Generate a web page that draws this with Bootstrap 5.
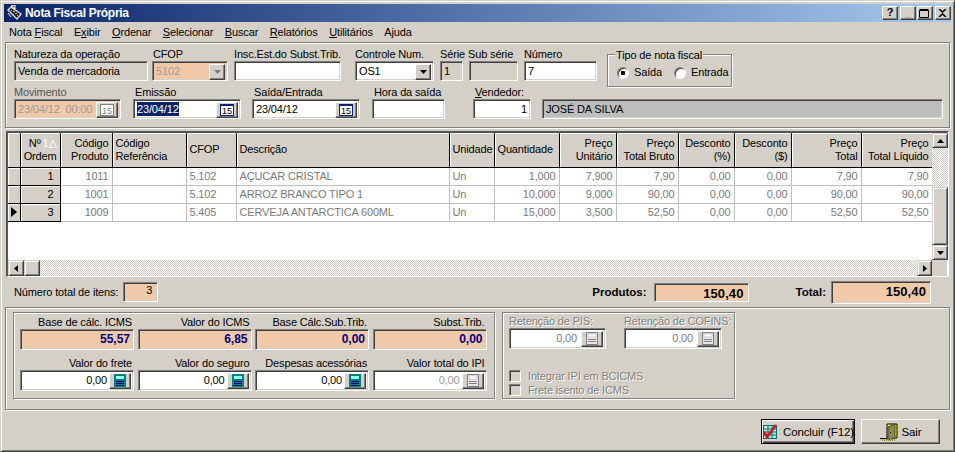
<!DOCTYPE html>
<html lang="pt-BR">
<head>
    <meta charset="UTF-8">
    <meta name="viewport" content="width=device-width, initial-scale=1.0">
    <title>Nota Fiscal Própria</title>
    <link href="https://cdn.jsdelivr.net/npm/bootstrap@5.3.0/dist/css/bootstrap.min.css" rel="stylesheet">
    <style>
        html, body { margin: 0; height: 452px; overflow: hidden; background: #d4d0c8; }
        body, .table { font-family: "Liberation Sans", Arial, sans-serif; font-size: 11px; letter-spacing: -.15px; line-height: 13px; color: #000; }

        .window { width: 955px; height: 452px; padding: 3px; background: #d4d0c8; border: 1px solid; border-color: #d4d0c8 #404040 #404040 #d4d0c8; box-shadow: inset 1px 1px 0 #fff, inset -1px -1px 0 #808080; margin: 0; }
        .titlebar { height: 18px; background: linear-gradient(90deg, #0a246a, #a6caf0); color: #fff; font-weight: 700; font-size: 12px; letter-spacing: -.3px; padding-left: 3px; }
        .titlebar svg { margin-right: 2px; }
        .cap-btn { width: 16px; height: 14px; background: #d4d0c8; border: 1px solid; border-color: #fff #404040 #404040 #fff; box-shadow: inset -1px -1px 0 #808080; margin-left: 1px; padding: 0; color: #000; font-weight: 700; font-size: 11px; line-height: 11px; text-align: center; }
        .cap-gap { margin-right: 1px; }
        .cap-dim { color: #808080; }
        .menubar { height: 20px; padding-left: 5px; gap: 11.5px; }
        .menubar .nav-link { padding: 0; color: #000; font-size: 11px; }

        .etched { border: 1px solid #808080; box-shadow: inset 1px 1px 0 #fff, 1px 1px 0 #fff; }
        .panel-top { height: 86px; margin: 0 1px; padding: 5px 8px 0; }
        .form-line { height: 38px; }
        .fld { flex: none; white-space: nowrap; }
        .fld label { display: block; height: 13px; }
        .box { height: 20px; background: #fff; border: 1px solid; border-color: #808080 #fff #fff #808080; box-shadow: inset 1px 1px 0 #404040, inset -1px -1px 0 #d4d0c8; padding: 2px 3px; line-height: 15px; overflow: hidden; }
        .box.plain { background: #d4d0c8; }
        .box.peach { background: #f0c9a9; }
        .box.grey { background: #bdbdbd; }
        .box.dim { color: #9a9a9a; }
        .box.with-btn { padding-right: 2px; }
        .box .spin { flex: none; width: 22px; height: 16px; margin: 0 0 0 auto; background: #d4d0c8; border: 1px solid; border-color: #fff #404040 #404040 #fff; box-shadow: inset -1px -1px 0 #808080; padding: 0; }
        .box .spin.combo { width: 16px; }
        .sel { background: #0a246a; color: #fff; }
        .soft { color: #555; }

        .f-nat { width: 134px; }
        .f-cfop { width: 76px; margin-left: 4px; }
        .f-insc { width: 107px; margin-left: 6px; }
        .f-ctrl { width: 79px; margin-left: 14px; }
        .f-serie { width: 23px; margin-left: 6px; }
        .f-sub { width: 49px; margin-left: 6px; }
        .f-num { width: 73px; margin-left: 6px; }
        .f-mov { width: 107px; }
        .f-emi { width: 108px; margin-left: 12px; }
        .f-sai { width: 108px; margin-left: 11px; }
        .f-hora { width: 73px; margin-left: 12px; }
        .f-vend { width: 58px; margin-left: 28px; }
        .f-name { width: 401px; margin-left: 11px; }
        .f-cfop label { padding-left: 1px; }
        .f-sub label { margin-left: -1px; }
        .f-vend label { padding-left: 2px; }
        .f-emi label, .f-sai label, .f-hora label { padding-left: 2px; }

        .tipo { position: relative; flex: none; width: 125px; height: 33px; margin: 6px 0 0 10px; padding: 11px 0 0 9px; gap: 12px; }
        .tipo legend { position: absolute; top: -6px; left: 7px; width: auto; margin: 0; padding: 0 1px; background: #d4d0c8; font-size: 11px; line-height: 12px; float: none; }
        .radio { appearance: none; flex: none; width: 12px; height: 12px; margin: 0 5px 0 0; border-radius: 50%; background: #fff; border: 1px solid; border-color: #808080 #fff #fff #808080; box-shadow: inset 1px 1px 0 #404040; }
        .radio:checked { background: radial-gradient(circle, #000 0 2px, #fff 2.5px); }

        .gridbox { height: 146px; margin: 3px 0 0 2px; width: 943px; background: #d4d0c8; border: 2px solid; border-color: #555 #fff #fff #555; border-bottom: 1px solid #fff; }
        .grid-main { width: 924px; flex: none; }
        .grid-view { height: 127px; background: #fff; overflow: hidden; }
        .table { table-layout: fixed; width: 924px; margin: 0; --bs-table-bg: transparent; }
        .table > :not(caption) > * > * { padding: 0 3px; border: 0; box-shadow: none; white-space: nowrap; overflow: hidden; }
        .table thead th { height: 34px; background: #d4d0c8; font-weight: 400; vertical-align: middle; border-right: 1px solid #000; border-bottom: 1px solid #000; box-shadow: inset 1px 1px 0 #fff; line-height: 13px; }
        .table tbody td { height: 18px; color: #7b7b7b; border-right: 1px solid #c0c0c0; border-bottom: 1px solid #c0c0c0; vertical-align: middle; }
        .table tbody td.fixed { background: #d4d0c8; color: #000; border-right: 1px solid #000; border-bottom: 1px solid #000; box-shadow: inset 1px 1px 0 #fff; padding: 0 6px 0 2px; }
        .table tbody td.mark { padding: 0 0 0 3px; }
        .sort { color: #fff; margin-left: 2px; }
        .c1 { width: 12px; } .c2 { width: 40px; } .c3 { width: 52px; } .c4 { width: 74px; } .c5 { width: 50px; } .c6 { width: 213px; } .c7 { width: 45px; }
        .c8 { width: 65px; } .c9 { width: 57px; } .c10 { width: 62px; } .c11 { width: 56px; } .c12 { width: 57px; } .c13 { width: 70px; } .c14 { width: 71px; }

        .sb-btn { flex: none; width: 16px; height: 16px; background: #d4d0c8; border: 1px solid; border-color: #d4d0c8 #404040 #404040 #d4d0c8; box-shadow: inset 1px 1px 0 #fff, inset -1px -1px 0 #808080; padding: 0; line-height: 0; }
        .sb-track { flex: 1 1 auto; background: repeating-conic-gradient(#fff 0 25%, #d4d0c8 0 50%) 0 0 / 2px 2px; }
        .hbar { height: 16px; }
        .vbar { width: 16px; height: 127px; flex: none; }
        .vbar .sb-thumb { height: 58px; width: 16px; }
        .vbar .sb-track { flex: 0 0 39px; }
        .vbar .sb-btn.small { height: 15px; }
        .hbar .sb-btn.last { width: 15px; }

        .totals { height: 30px; padding: 0 19px 0 9px; margin: 0 1px; }
        .totals b { font-size: 11.5px; letter-spacing: 0; }
        .t-items { width: 35px; margin-left: 5px; text-align: right; padding: 0 5px 0 0; line-height: 15px; }
        .t-prod { width: 95px; height: 19px; margin-left: 7px; text-align: right; font-weight: 700; font-size: 13px; padding: 2px 4px; letter-spacing: .1px; }
        .t-total { width: 100px; height: 23px; margin-left: 5px; text-align: right; font-weight: 700; font-size: 13px; padding: 2px 4px; letter-spacing: .1px; }
        .gap-total { margin-left: 47px; }

        .panel-bottom { height: 103px; margin: 0 1px; padding: 4px 7px; gap: 7px; }
        .group { height: 87px; flex: none; }
        .group-tax { width: 482px; padding: 3px 0 0 6px; display: grid; grid-template-columns: repeat(4, 114px); column-gap: 3.5px; grid-auto-rows: 41px; }
        .tax { text-align: right; }
        .tax label { display: block; height: 13px; padding-right: 2px; }
        .tax .box { height: 21px; text-align: right; padding: 2px 2px 2px 3px; }
        .tax .num { margin-left: auto; padding-right: 2px; }
        .tax .val { font-weight: 700; color: #00007f; font-size: 12px; letter-spacing: 0; padding-right: 3px; }
        .group-ret { width: 233px; padding: 2px 0 0 6px; color: #808080; }
        .off { color: #808080; text-shadow: 1px 1px 0 #fff; white-space: nowrap; }
        .ret { flex: none; }
        .ret-a { width: 97px; }
        .ret-b { width: 98px; margin-left: 18px; }
        .ret-row { height: 42px; margin-bottom: 12px; }
        .ret .box { height: 21px; text-align: right; color: #808080; padding: 2px; }
        .chk { height: 14px; }
        .chk span.tick { flex: none; width: 12px; height: 12px; margin-right: 7px; border: 1px solid; border-color: #808080 #fff #fff #808080; box-shadow: inset 1px 1px 0 #404040; }

        .footer { height: 38px; padding: 9px 11px 0 0; gap: 6px; }
        .win-btn { height: 25px; padding: 0; border-radius: 0; background: #d4d0c8; color: #000; font-size: 11.5px; letter-spacing: -.15px; line-height: 14px; white-space: nowrap; border: 1px solid; border-color: #fff #404040 #404040 #fff; box-shadow: inset -1px -1px 0 #808080; gap: 4px; }
        .win-btn.default { width: 94px; outline: 1px solid #000; outline-offset: -1px; box-shadow: inset 1px 1px 0 #fff, inset -1px -1px 0 #404040, inset -2px -2px 0 #808080; }
        .win-btn.exit { width: 79px; }
    </style>
</head>
<body>
<div class="window d-flex flex-column">
    <div class="titlebar d-flex align-items-center">
        <svg width="16" height="16" viewBox="0 0 16 16"><path d="M0 5 4 1l11 8-5 6z" fill="#d8d8d8"/><path d="M2 5 4 3l9 6-3 4z" fill="#222"/><path d="M4 5h1v1H4zM6 6h2v1H6zM8 8h2v1H8zM6 9h1v1H6zM10 10h1v1h-1z" fill="#e0c060"/><path d="M4 1 8 0v4zM1 8l3 4" stroke="#fff" fill="#666"/></svg>
        <span>Nota Fiscal Própria</span>
        <div class="ms-auto d-flex align-items-center">
            <div class="cap-btn cap-gap">?</div>
            <div class="cap-btn cap-dim">_</div>
            <div class="cap-btn cap-gap d-flex align-items-center justify-content-center"><svg width="10" height="9" viewBox="0 0 10 9"><path d="M.5 1.5h9v7h-9zM.5.5h9" fill="none" stroke="#000"/></svg></div>
            <div class="cap-btn d-flex align-items-center justify-content-center"><svg width="9" height="8" viewBox="0 0 9 8"><path d="M1 0l3.5 3L8 0M1 8l3.5-3L8 8" fill="none" stroke="#000" stroke-width="1.5"/></svg></div>
        </div>
    </div>

    <nav class="nav menubar align-items-center">
        <a class="nav-link" href="#">Nota <u>F</u>iscal</a>
        <a class="nav-link" href="#">E<u>x</u>ibir</a>
        <a class="nav-link" href="#"><u>O</u>rdenar</a>
        <a class="nav-link" href="#"><u>S</u>elecionar</a>
        <a class="nav-link" href="#"><u>B</u>uscar</a>
        <a class="nav-link" href="#"><u>R</u>elatórios</a>
        <a class="nav-link" href="#"><u>U</u>tilitários</a>
        <a class="nav-link" href="#">A<u>j</u>uda</a>
    </nav>

    <div class="etched panel-top">
        <div class="d-flex form-line">
            <div class="fld f-nat"><label>Natureza da operação</label><div class="box plain">Venda de mercadoria</div></div>
            <div class="fld f-cfop"><label>CFOP</label><div class="box peach dim with-btn d-flex"><span>5102</span><button class="spin combo d-flex align-items-center justify-content-center"><svg width="7" height="4" viewBox="0 0 7 4"><path d="M0 0h7L3.5 4z" fill="#808080"/></svg></button></div></div>
            <div class="fld f-insc"><label>Insc.Est.do Subst.Trib.</label><div class="box"></div></div>
            <div class="fld f-ctrl"><label>Controle Num.</label><div class="box with-btn d-flex"><span>OS1</span><button class="spin combo d-flex align-items-center justify-content-center"><svg width="7" height="4" viewBox="0 0 7 4"><path d="M0 0h7L3.5 4z"/></svg></button></div></div>
            <div class="fld f-serie"><label>Série</label><div class="box plain">1</div></div>
            <div class="fld f-sub"><label>Sub série</label><div class="box plain"></div></div>
            <div class="fld f-num"><label>Número</label><div class="box">7</div></div>
            <fieldset class="tipo etched d-flex align-items-start">
                <legend>Tipo de nota fiscal</legend>
                <div class="d-flex align-items-center"><input class="radio" type="radio" name="tipo" checked><span>Saída</span></div>
                <div class="d-flex align-items-center"><input class="radio" type="radio" name="tipo"><span>Entrada</span></div>
            </fieldset>
        </div>
        <div class="d-flex">
            <div class="fld f-mov"><label class="soft">Movimento</label><div class="box peach dim with-btn d-flex"><span>23/04/12&nbsp; 00:00</span><button class="spin d-flex align-items-center justify-content-center"><svg width="14" height="12" viewBox="0 0 14 12"><rect x=".5" y=".5" width="13" height="11" fill="#fff" stroke="#808080"/><text x="7" y="9.5" font-size="9" text-anchor="middle" fill="#808080" font-family="Liberation Sans">15</text></svg></button></div></div>
            <div class="fld f-emi"><label>Emissão</label><div class="box with-btn d-flex"><span class="sel">23/04/12</span><button class="spin d-flex align-items-center justify-content-center"><svg width="14" height="12" viewBox="0 0 14 12"><rect x=".5" y=".5" width="13" height="11" fill="#fff" stroke="#0a246a"/><path d="M1 1.5h12" stroke="#0a246a"/><text x="7" y="10" font-size="9" text-anchor="middle" fill="#000" font-family="Liberation Sans">15</text></svg></button></div></div>
            <div class="fld f-sai"><label>Saída/Entrada</label><div class="box with-btn d-flex"><span>23/04/12</span><button class="spin d-flex align-items-center justify-content-center"><svg width="14" height="12" viewBox="0 0 14 12"><rect x=".5" y=".5" width="13" height="11" fill="#fff" stroke="#0a246a"/><path d="M1 1.5h12" stroke="#0a246a"/><text x="7" y="10" font-size="9" text-anchor="middle" fill="#000" font-family="Liberation Sans">15</text></svg></button></div></div>
            <div class="fld f-hora"><label>Hora da saída</label><div class="box"></div></div>
            <div class="fld f-vend"><label><u>V</u>endedor:</label><div class="box text-end">1</div></div>
            <div class="fld f-name"><label></label><div class="box grey">JOSÉ DA SILVA</div></div>
        </div>
    </div>

    <div class="gridbox d-flex">
        <div class="grid-main">
            <div class="grid-view">
                <table class="table">
                    <thead>
                        <tr>
                            <th class="c1"></th>
                            <th class="c2 text-end">Nº<span class="sort">1</span><svg width="8" height="8" viewBox="0 0 8 8"><path d="M4 .5 7.5 7.5H.5z" fill="none" stroke="#fff"/></svg><br>Ordem</th>
                            <th class="c3 text-end">Código<br>Produto</th>
                            <th class="c4">Código<br>Referência</th>
                            <th class="c5">CFOP</th>
                            <th class="c6">Descrição</th>
                            <th class="c7">Unidade</th>
                            <th class="c8">Quantidade</th>
                            <th class="c9 text-end">Preço<br>Unitário</th>
                            <th class="c10 text-end">Preço<br>Total Bruto</th>
                            <th class="c11 text-end">Desconto<br>(%)</th>
                            <th class="c12 text-end">Desconto<br>($)</th>
                            <th class="c13 text-end">Preço<br>Total</th>
                            <th class="c14 text-end">Preço<br>Total Líquido</th>
                        </tr>
                    </thead>
                    <tbody>
                        <tr>
                            <td class="fixed mark"></td><td class="fixed text-end">1</td><td class="text-end">1011</td><td></td><td>5.102</td><td>AÇUCAR CRISTAL</td><td>Un</td>
                            <td class="text-end">1,000</td><td class="text-end">7,900</td><td class="text-end">7,90</td><td class="text-end">0,00</td><td class="text-end">0,00</td><td class="text-end">7,90</td><td class="text-end">7,90</td>
                        </tr>
                        <tr>
                            <td class="fixed mark"></td><td class="fixed text-end">2</td><td class="text-end">1001</td><td></td><td>5.102</td><td>ARROZ BRANCO TIPO 1</td><td>Un</td>
                            <td class="text-end">10,000</td><td class="text-end">9,000</td><td class="text-end">90,00</td><td class="text-end">0,00</td><td class="text-end">0,00</td><td class="text-end">90,00</td><td class="text-end">90,00</td>
                        </tr>
                        <tr>
                            <td class="fixed mark"><svg class="d-block" width="6" height="10" viewBox="0 0 6 10"><path d="M0 0l6 5-6 5z"/></svg></td><td class="fixed text-end">3</td><td class="text-end">1009</td><td></td><td>5.405</td><td>CERVEJA ANTARCTICA 600ML</td><td>Un</td>
                            <td class="text-end">15,000</td><td class="text-end">3,500</td><td class="text-end">52,50</td><td class="text-end">0,00</td><td class="text-end">0,00</td><td class="text-end">52,50</td><td class="text-end">52,50</td>
                        </tr>
                    </tbody>
                </table>
            </div>
            <div class="hbar d-flex">
                <div class="sb-btn d-flex align-items-center justify-content-center"><svg width="4" height="7" viewBox="0 0 4 7"><path d="M4 0v7L0 3.5z"/></svg></div>
                <div class="sb-btn"></div>
                <div class="sb-track"></div>
                <div class="sb-btn last d-flex align-items-center justify-content-center"><svg width="4" height="7" viewBox="0 0 4 7"><path d="M0 0v7l4-3.5z"/></svg></div>
            </div>
        </div>
        <div class="vbar d-flex flex-column">
            <div class="sb-btn small d-flex align-items-center justify-content-center"><svg width="7" height="4" viewBox="0 0 7 4"><path d="M0 4h7L3.5 0z"/></svg></div>
            <div class="sb-track"></div>
            <div class="sb-btn sb-thumb"></div>
            <div class="sb-btn small d-flex align-items-center justify-content-center"><svg width="7" height="4" viewBox="0 0 7 4"><path d="M0 0h7L3.5 4z"/></svg></div>
        </div>
    </div>

    <div class="totals d-flex align-items-center">
        <span>Número total de itens:</span>
        <div class="box peach t-items">3</div>
        <b class="ms-auto">Produtos:</b>
        <div class="box peach t-prod">150,40</div>
        <b class="gap-total">Total:</b>
        <div class="box peach t-total">150,40</div>
    </div>

    <div class="etched panel-bottom d-flex">
        <div class="etched group group-tax">
            <div class="tax"><label>Base de cálc. ICMS</label><div class="box peach val">55,57</div></div>
            <div class="tax"><label>Valor do ICMS</label><div class="box peach val">6,85</div></div>
            <div class="tax"><label>Base Cálc.Sub.Trib.</label><div class="box peach val">0,00</div></div>
            <div class="tax"><label>Subst.Trib.</label><div class="box peach val">0,00</div></div>
            <div class="tax"><label>Valor do frete</label><div class="box with-btn d-flex align-items-center"><span class="num">0,00</span><button class="spin flex-shrink-0 ms-0 d-flex align-items-center justify-content-center"><svg width="14" height="13" viewBox="0 0 14 13"><rect x="1" y="0" width="12" height="13" fill="#008080"/><rect x="3" y="2" width="8" height="3" fill="#9fe"/><path d="M3 7h8v1H3zM3 9h8v1H3zM3 11h8v1H3z" fill="#00007f"/></svg></button></div></div>
            <div class="tax"><label>Valor do seguro</label><div class="box with-btn d-flex align-items-center"><span class="num">0,00</span><button class="spin flex-shrink-0 ms-0 d-flex align-items-center justify-content-center"><svg width="14" height="13" viewBox="0 0 14 13"><rect x="1" y="0" width="12" height="13" fill="#008080"/><rect x="3" y="2" width="8" height="3" fill="#9fe"/><path d="M3 7h8v1H3zM3 9h8v1H3zM3 11h8v1H3z" fill="#00007f"/></svg></button></div></div>
            <div class="tax"><label>Despesas acessórias</label><div class="box with-btn d-flex align-items-center"><span class="num">0,00</span><button class="spin flex-shrink-0 ms-0 d-flex align-items-center justify-content-center"><svg width="14" height="13" viewBox="0 0 14 13"><rect x="1" y="0" width="12" height="13" fill="#008080"/><rect x="3" y="2" width="8" height="3" fill="#9fe"/><path d="M3 7h8v1H3zM3 9h8v1H3zM3 11h8v1H3z" fill="#00007f"/></svg></button></div></div>
            <div class="tax"><label>Valor total do IPI</label><div class="box dim with-btn d-flex align-items-center"><span class="num">0,00</span><button class="spin flex-shrink-0 ms-0 d-flex align-items-center justify-content-center"><svg width="14" height="13" viewBox="0 0 14 13"><rect x="1.5" y=".5" width="11" height="12" fill="#e8e8e8" stroke="#808080"/><rect x="3" y="2" width="8" height="3" fill="#fff" stroke="#a0a0a0" stroke-width=".5"/><path d="M3 7h8v1H3zM3 9h8v1H3z" fill="#808080"/></svg></button></div></div>
        </div>
        <div class="etched group group-ret">
            <div class="d-flex ret-row">
                <div class="ret ret-a"><div class="off">Retenção de PIS:</div><div class="box with-btn d-flex align-items-center"><span class="ms-auto pe-1">0,00</span><button class="spin flex-shrink-0 ms-0 d-flex align-items-center justify-content-center"><svg width="14" height="13" viewBox="0 0 14 13"><rect x="1.5" y=".5" width="11" height="12" fill="#e8e8e8" stroke="#808080"/><rect x="3" y="2" width="8" height="3" fill="#fff" stroke="#a0a0a0" stroke-width=".5"/><path d="M3 7h8v1H3zM3 9h8v1H3z" fill="#808080"/></svg></button></div></div>
                <div class="ret ret-b"><div class="off">Retenção de COFINS:</div><div class="box with-btn d-flex align-items-center"><span class="ms-auto pe-1">0,00</span><button class="spin flex-shrink-0 ms-0 d-flex align-items-center justify-content-center"><svg width="14" height="13" viewBox="0 0 14 13"><rect x="1.5" y=".5" width="11" height="12" fill="#e8e8e8" stroke="#808080"/><rect x="3" y="2" width="8" height="3" fill="#fff" stroke="#a0a0a0" stroke-width=".5"/><path d="M3 7h8v1H3zM3 9h8v1H3z" fill="#808080"/></svg></button></div></div>
            </div>
            <div class="chk d-flex align-items-center off"><span class="tick"></span>Integrar IPI em BCICMS</div>
            <div class="chk d-flex align-items-center off"><span class="tick"></span>Frete isento de ICMS</div>
        </div>
    </div>

    <div class="footer d-flex justify-content-end align-items-start">
        <button class="btn win-btn default d-flex align-items-center justify-content-center">
            <svg width="17" height="17" viewBox="0 0 17 17"><rect x="1.5" y="2.5" width="13" height="13" fill="#b8e8e0" stroke="#007070"/><path d="M1 6h14M1 9h14M1 12h14M6 3v12M10 3v12" stroke="#007070"/><path d="M2 9l3 5 9-12" fill="none" stroke="#e01010" stroke-width="2.5"/></svg>
            <span>Concluir (F12)</span>
        </button>
        <button class="btn win-btn exit d-flex align-items-center justify-content-center">
            <svg width="18" height="18" viewBox="0 0 18 18"><path d="M7 1h10v14H7z" fill="#ffff30" stroke="#000"/><path d="M8 4l7-3v14l-7 2z" fill="#8a8a50" stroke="#404020"/><path d="M10 9h1v1h-1z" fill="#000"/><path d="M0 15.5h7" stroke="#000"/><path d="M2 17h13" stroke="#909040" stroke-width="2" stroke-dasharray="1 1"/></svg>
            <span>Sair</span>
        </button>
    </div>
</div>
<script src="https://cdn.jsdelivr.net/npm/bootstrap@5.3.0/dist/js/bootstrap.bundle.min.js"></script>
</body>
</html>
